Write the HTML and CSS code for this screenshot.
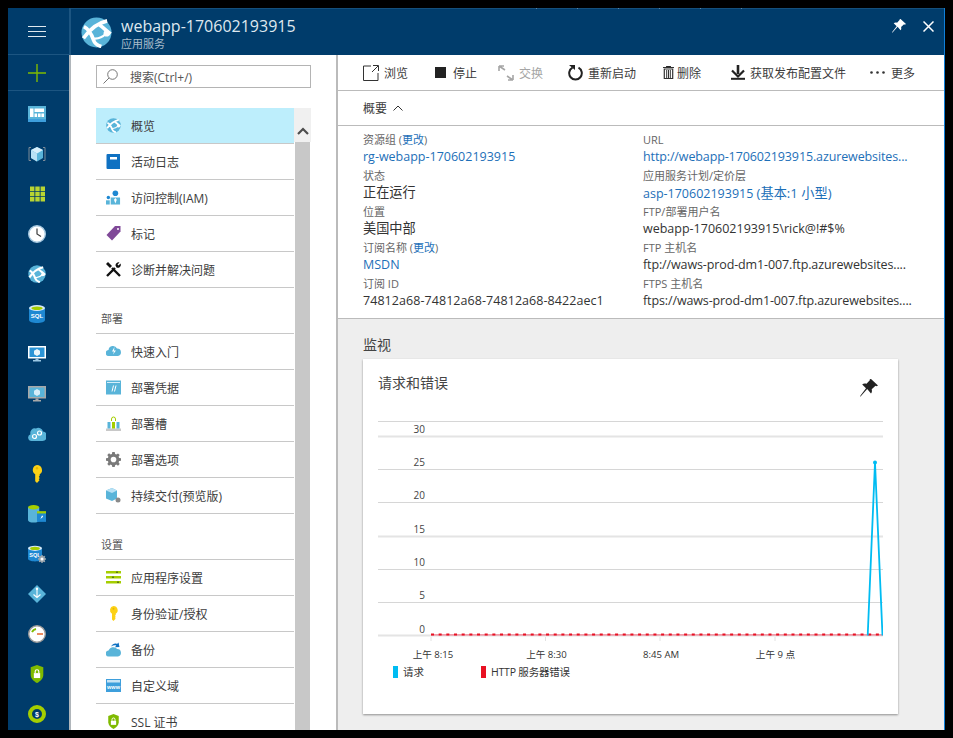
FILE: index.html
```html
<!DOCTYPE html>
<html lang="zh">
<head>
<meta charset="utf-8">
<title>webapp-170602193915</title>
<link rel="stylesheet" href="styles.css">
</head>
<body>
<svg class="defs" width="0" height="0" aria-hidden="true">
  <defs>
    <symbol id="globe" viewBox="0 0 32 32">
      <circle cx="16" cy="16" r="15.500" fill="currentColor"/>
      <path d="M3 10c5 2.500 8 8 10 14 1 3 3 5 8 6.500M27 4C18 6 10 11 2.500 22M19 8c4 3 7 6 11.500 9.500" fill="none" stroke="#fff" stroke-width="3.800"/>
      <path d="M12 22c5 1 10-1 14-5" fill="none" stroke="#fff" stroke-width="2.200"/>
      <circle cx="26.500" cy="17" r="3.200" fill="#fff"/>
    </symbol>
    <symbol id="key" viewBox="0 0 14 20">
      <path d="M7 0a5.600 5.600 0 0 1 3 10.300V12L9 13l1 1.500-1 1.200.8 1.300L7 20l-2-2V10.300A5.600 5.600 0 0 1 7 0z" fill="#fcd116"/>
      <circle cx="7" cy="3.600" r="1.300" fill="#e8b800"/>
    </symbol>
    <symbol id="shield" viewBox="0 0 16 20">
      <path d="M8 0l7 2.500V11c0 4-3.500 7-7 9-3.500-2-7-5-7-9V2.500z" fill="#7fba00"/>
      <path d="M4.500 9h7v5.500h-7z" fill="#fff"/>
      <path d="M6 9V7.300a2 2 0 0 1 4 0V9" fill="none" stroke="#fff" stroke-width="1.300"/>
    </symbol>
    <symbol id="pin" viewBox="0 0 18 18">
      <path d="M11 0l7 6.500-1.500.8-1-.6-3.800 3.500c.5 1.800.2 3.300-.7 4.300L7.200 10 1 17l-1 1 .5-1.500L6 9.300 2.200 5.500c1.100-1 2.600-1.200 4.300-.7l3.500-3.700-.4-.8z" fill="currentColor"/>
    </symbol>
    <symbol id="db" viewBox="0 0 16 18">
      <path d="M0 3v12c0 1.700 3.600 3 8 3s8-1.300 8-3V3z" fill="#1e88d2"/>
      <ellipse cx="8" cy="3" rx="8" ry="3" fill="#d6e9f7"/>
      <ellipse cx="8" cy="3.200" rx="5.600" ry="1.800" fill="#a5ce00"/>
    </symbol>
    <symbol id="monitor" viewBox="0 0 18 16">
      <path d="M0 0h18v12.500H0z" fill="currentColor"/>
      <path d="M1.500 1.500h15v9.500h-15z" fill="var(--screen)"/>
      <path d="M7.500 12.500h3v1.500h-3zM5 14h8v1.500H5z" fill="var(--stand)"/>
      <path d="M9 3l3 1.700v3.500L9 10 6 8.200V4.700z" fill="var(--cube)"/>
    </symbol>
    <symbol id="gear" viewBox="0 0 16 16">
      <path d="M6.700 0h2.600l.4 2.100 1.300.6L12.800 1.500l1.800 1.800-1.200 1.800.6 1.300 2 .3v2.600l-2 .4-.6 1.300 1.200 1.800-1.800 1.800-1.800-1.200-1.300.6-.4 2H6.700l-.4-2-1.300-.6-1.800 1.200-1.800-1.800 1.200-1.800-.6-1.300-2-.4V6.700l2-.4.600-1.300-1.200-1.800 1.800-1.800 1.800 1.200 1.300-.6z" fill="currentColor"/>
      <circle cx="8" cy="8" r="3" fill="#fff"/>
    </symbol>
  </defs>
</svg>

<div class="frame">
  <nav class="rail">
    <div class="rail-top">
      <svg class="ic-menu" width="18" height="11" viewBox="0 0 18 11"><path d="M0 .5h18M0 5.500h18M0 10.500h18" stroke="#dfe8ef" stroke-width="1"/></svg>
    </div>
    <div class="rail-add">
      <svg width="18" height="18" viewBox="0 0 18 18"><path d="M9 0v18M0 9h18" stroke="#7fba00" stroke-width="1.400"/></svg>
    </div>
    <div class="rail-list">
      <svg class="ri" viewBox="0 0 18 16"><path d="M0 0h18v16H0z" fill="#59b4d9"/><path d="M0 13h18v3H0z" fill="#3e9fdc"/><path d="M2 2.500h3.500v8.500H2zM6.500 2.500H16V6H6.500zM6.500 7.500h2.600V11H6.500zM10 7.500h2.600V11H10zM13.400 7.500H16V11h-2.600z" fill="#fff"/></svg>
      <svg class="ri" viewBox="0 0 18 16"><path d="M3 1.500H1v13h2M15 1.500h2v13h-2" fill="none" stroke="#7c8b98" stroke-width="1"/><path d="M9 1l6 3v8l-6 3.500L3 12V4z" fill="#59b4d9"/><path d="M9 1l6 3-6 3.500L3 4z" fill="#d6eefa"/><path d="M9 7.500v8L3 12V4z" fill="#b8e1f5"/></svg>
      <svg class="ri ri-grid" viewBox="0 0 15 15"><path d="M0 0h4.400v4.400H0zM5.300 0h4.400v4.400H5.300zM10.600 0H15v4.400h-4.400zM0 5.300h4.400v4.400H0zM5.300 5.300h4.400v4.400H5.300zM10.600 5.300H15v4.400h-4.400zM0 10.600h4.400V15H0zM5.300 10.600h4.400V15H5.300zM10.600 10.600H15V15h-4.400z" fill="#b8d432"/></svg>
      <svg class="ri" viewBox="0 0 18 18"><circle cx="9" cy="9" r="8.300" fill="#fff" stroke="#a7c9e0" stroke-width="1.400"/><path d="M9 3.500V9l4 2.500" fill="none" stroke="#3c3c3c" stroke-width="1.200"/></svg>
      <svg class="ri rc-globe"><use href="#globe"/></svg>
      <svg class="ri" viewBox="0 0 16 18"><use href="#db"/><text x="8" y="13" class="sql-t">SQL</text></svg>
      <svg class="ri rc-mon1"><use href="#monitor"/></svg>
      <svg class="ri rc-mon2"><use href="#monitor"/></svg>
      <svg class="ri" viewBox="0 0 18 15"><path d="M3.500 14.500a3.500 3.500 0 0 1-1-6.800A4.500 4.500 0 0 1 8 2 4.800 4.800 0 0 1 15 5a4.800 4.800 0 0 1-.5 9.500z" fill="#59b4d9"/><circle cx="6.500" cy="10" r="2" fill="none" stroke="#fff" stroke-width="1.200"/><circle cx="11.500" cy="6.500" r="2" fill="none" stroke="#fff" stroke-width="1.200"/></svg>
      <svg class="ri"><use href="#key"/></svg>
      <svg class="ri" viewBox="0 0 16 16"><path d="M0 2v11c0 1.600 2.300 2.600 5 2.600s5-1 5-2.600V2z" fill="#59b4d9"/><ellipse cx="5" cy="2" rx="5" ry="2" fill="#a5ce00"/><path d="M8 6h8v9H8z" fill="#1e88d2"/><path d="M8 5.500h8v2H8z" fill="#a5ce00"/><path d="M12.500 9L11 12.500l2.500-2z" fill="#fff"/></svg>
      <svg class="ri" viewBox="0 0 18 18"><use href="#db" width="14" height="17"/><text x="7" y="11.500" class="sql-t sql-s">SQL</text><g class="rail-gear"><use href="#gear" x="10" y="10" width="8" height="8"/></g></svg>
      <svg class="ri" viewBox="0 0 18 18"><path d="M9 0l9 9-9 9-9-9z" fill="#59b4d9"/><path d="M9 3.500v8M5.500 9.500L9 12.500l3.500-3" fill="none" stroke="#fff" stroke-width="1.100"/><circle cx="9" cy="3.800" r="1.200" fill="#fff"/></svg>
      <svg class="ri" viewBox="0 0 18 18"><circle cx="9" cy="9" r="8.300" fill="#fff" stroke="#9b9b9b" stroke-width="1.400"/><path d="M4 7a6 6 0 0 1 4-3" fill="none" stroke="#7fba00" stroke-width="2"/><path d="M9 9h6" stroke="#e25a1c" stroke-width="1.400"/></svg>
      <svg class="ri"><use href="#shield"/></svg>
      <svg class="ri" viewBox="0 0 18 18"><circle cx="9" cy="9" r="7" fill="none" stroke="#a5ce00" stroke-width="4"/><text x="9" y="11.500" class="coin-t">$</text></svg>
    </div>
  </nav>

  <div class="main">
    <header class="head">
      <span class="head-ticks"></span>
      <svg class="head-logo"><use href="#globe"/></svg>
      <div class="head-text">
        <div class="head-title">webapp-170602193915</div>
        <div class="head-sub">应用服务</div>
      </div>
      <svg class="head-pin"><use href="#pin"/></svg>
      <svg class="head-close" width="11" height="11" viewBox="0 0 11 11"><path d="M.5.500l10 10M10.500.500l-10 10" stroke="#fff" stroke-width="1.500"/></svg>
    </header>

    <div class="body">
      <aside class="menu">
        <div class="search">
          <svg width="15" height="15" viewBox="0 0 15 15"><circle cx="9.500" cy="5.500" r="4.800" fill="none" stroke="#666" stroke-width=".9"/><path d="M6 9L.5 14.500" stroke="#666" stroke-width=".9"/></svg>
          <span>搜索(Ctrl+/)</span>
        </div>
        <div class="menu-scroll">
          <div class="menu-list">
            <div class="item active"><svg class="mi c-globe"><use href="#globe"/></svg><span>概览</span></div>
            <div class="item"><svg class="mi" viewBox="0 0 14 15"><path d="M0 1a1 1 0 0 1 1-1h12.500v15H1a1 1 0 0 1-1-1z" fill="#0f71c2"/><path d="M3.500 3h7v2.500h-7z" fill="#fff"/></svg><span>活动日志</span></div>
            <div class="item"><svg class="mi" viewBox="0 0 16 15"><circle cx="10" cy="3" r="3" fill="#1e88d2"/><path d="M5 7.500h10V15H5z" fill="#59b4d9"/><path d="M10 8l-1.500 2L10 14l1.500-4z" fill="#fff"/><circle cx="2.500" cy="7.500" r="1.800" fill="#1e88d2"/><path d="M0 10.500h4V15H0z" fill="#59b4d9"/></svg><span>访问控制(IAM)</span></div>
            <div class="item"><svg class="mi" viewBox="0 0 15 15"><path d="M9 0h5.500v5.500L6 14.500.5 9z" fill="#804998"/><circle cx="12" cy="3" r="1" fill="#fff"/></svg><span>标记</span></div>
            <div class="item"><svg class="mi" viewBox="0 0 15 15"><path d="M1 14L9 6M14 14L6 6" stroke="#111" stroke-width="2.400"/><path d="M9.500 3.500A3 3 0 0 1 13.500.500L11.500 2.500l1 1 2-2a3 3 0 0 1-4 4zM0 2l2-2 4 4-2 2z" fill="#111"/></svg><span>诊断并解决问题</span></div>
            <div class="group">部署</div>
            <div class="item"><svg class="mi" viewBox="0 0 15 15"><path d="M3 12a3 3 0 0 1-.5-6A4.500 4.500 0 0 1 11 4.500 3.800 3.800 0 0 1 12 12z" fill="#59b4d9"/><path d="M8.500 3L6 7.500h2L7 10.500 10 6.500H8z" fill="#fff"/></svg><span>快速入门</span></div>
            <div class="item"><svg class="mi" viewBox="0 0 15 14"><path d="M0 0h15v14H0z" fill="#59b4d9"/><path d="M1 2h13" stroke="#d6eefa"/><path d="M6 11l1.500-6M8.500 11L10 5" stroke="#fff" stroke-width="1"/></svg><span>部署凭据</span></div>
            <div class="item"><svg class="mi" viewBox="0 0 15 15"><path d="M0 12.500h15V15H0z" fill="#c8c8c8"/><path d="M1.500 6h3v6.500h-3z" fill="#59b4d9"/><path d="M6 6h3v6.500H6z" fill="#a5ce00"/><path d="M10.500 6h3v6.500h-3z" fill="#59b4d9"/><path d="M5.500 5V3a2 2 0 0 1 4 0v2" fill="none" stroke="#a5ce00"/></svg><span>部署槽</span></div>
            <div class="item"><svg class="mi c-gear"><use href="#gear"/></svg><span>部署选项</span></div>
            <div class="item"><svg class="mi" viewBox="0 0 15 15"><path d="M6 0l5 2.500v8L6 13l-6-2.500v-8z" fill="#59b4d9"/><path d="M6 0l5 2.500L6 5 0 2.500z" fill="#b8e1f5"/><circle cx="12" cy="12" r="2.500" fill="#8a8a8a"/></svg><span>持续交付(预览版)</span></div>
            <div class="group">设置</div>
            <div class="item"><svg class="mi" viewBox="0 0 15 13"><path d="M0 0h15v2.500H0zM0 5h15v2.500H0zM0 10h15v2.500H0z" fill="#a5ce00"/><path d="M10 .5h2v1.500h-2zM6 5.500h2V7H6zM11 10.500h2V12h-2z" fill="#5c7a10"/></svg><span>应用程序设置</span></div>
            <div class="item"><svg class="mi"><use href="#key"/></svg><span>身份验证/授权</span></div>
            <div class="item"><svg class="mi" viewBox="0 0 15 14"><path d="M3 14a3 3 0 0 1-.5-6A5 5 0 0 1 11 6.500 3.800 3.800 0 0 1 12 14z" fill="#59b4d9"/><path d="M5 4c1.500-2.500 4-3.500 6-2.500L12.500 0l1 4.500-4.500.2 1.300-1.600C8.500 2.500 7 3 5 4z" fill="#0f71c2"/></svg><span>备份</span></div>
            <div class="item"><svg class="mi" viewBox="0 0 15 13"><path d="M0 0h15v13H0z" fill="#3e9fdc"/><path d="M1 1h13v2.500H1z" fill="#c9e4f5"/><text x="7.500" y="9.500" class="www-t">www</text></svg><span>自定义域</span></div>
            <div class="item"><svg class="mi"><use href="#shield"/></svg><span>SSL 证书</span></div>
          </div>
          <div class="scrollbar">
            <div class="scroll-up"><svg width="12" height="8" viewBox="0 0 12 8"><path d="M1 7l5-5 5 5" fill="none" stroke="#4d4d4d" stroke-width="2.200"/></svg></div>
            <div class="scroll-thumb"></div>
          </div>
        </div>
      </aside>

      <section class="pane">
        <div class="toolbar">
          <div class="tool t-browse"><svg width="16" height="16" viewBox="0 0 16 16"><path d="M8 1H.5v14.500H15V8M9 7l6-6M10 .5h5.500V6" fill="none" stroke="#333" stroke-width="1"/></svg><span>浏览</span></div>
          <div class="tool t-stop"><svg width="11" height="11" viewBox="0 0 11 11"><path d="M0 0h11v11H0z" fill="#222"/></svg><span>停止</span></div>
          <div class="tool t-swap off"><svg width="16" height="16" viewBox="0 0 16 16"><path d="M1 1l6 4M1 1v5M1 1h5M15 15L9 11M15 15v-5M15 15h-5" fill="none" stroke="#a5a5a5" stroke-width="1.600"/></svg><span>交换</span></div>
          <div class="tool t-restart"><svg width="15" height="17" viewBox="0 0 15 17"><path d="M4.500 3.700a6.300 6.300 0 1 0 6 0" fill="none" stroke="#222" stroke-width="2"/><path d="M1 1h6v5z" fill="#222"/></svg><span>重新启动</span></div>
          <div class="tool t-del"><svg width="11" height="13" viewBox="0 0 11 13"><path d="M0 1.500h11M1.300 3h8.400v9.500H1.300z" fill="none" stroke="#333" stroke-width="1.200"/><path d="M3.700 4v8M5.500 4v8M7.300 4v8M3.500 0h4v1h-4z" stroke="#333" stroke-width="1"/></svg><span>删除</span></div>
          <div class="tool t-dl"><svg width="14" height="15" viewBox="0 0 14 15"><path d="M7 0v9" stroke="#222" stroke-width="2.600"/><path d="M1 5.500l6 6 6-6" fill="none" stroke="#222" stroke-width="2.200"/><path d="M0 13.800h14" stroke="#222" stroke-width="2"/></svg><span>获取发布配置文件</span></div>
          <div class="tool t-more"><svg width="15" height="3" viewBox="0 0 15 3"><circle cx="1.500" cy="1.500" r="1.300" fill="#333"/><circle cx="7.500" cy="1.500" r="1.300" fill="#333"/><circle cx="13.500" cy="1.500" r="1.300" fill="#333"/></svg><span>更多</span></div>
        </div>

        <div class="summary-head"><span>概要</span><svg width="10" height="6" viewBox="0 0 10 6"><path d="M.5 5.500L5 1l4.500 4.500" fill="none" stroke="#333" stroke-width="1"/></svg></div>

        <div class="info">
          <div class="f"><div class="k">资源组 (<a class="lnk">更改</a>)</div><div class="v lnk">rg-webapp-170602193915</div></div>
          <div class="f"><div class="k">URL</div><div class="v lnk tight">http://webapp-170602193915.azurewebsites...</div></div>
          <div class="f"><div class="k">状态</div><div class="v cjk">正在运行</div></div>
          <div class="f"><div class="k">应用服务计划/定价层</div><div class="v lnk">asp-170602193915 <span class="cjk">(基本:1 小型)</span></div></div>
          <div class="f"><div class="k">位置</div><div class="v cjk">美国中部</div></div>
          <div class="f"><div class="k">FTP/部署用户名</div><div class="v">webapp-170602193915\rick@!#$%</div></div>
          <div class="f"><div class="k">订阅名称 (<a class="lnk">更改</a>)</div><div class="v lnk">MSDN</div></div>
          <div class="f"><div class="k">FTP 主机名</div><div class="v tight">ftp://waws-prod-dm1-007.ftp.azurewebsites....</div></div>
          <div class="f"><div class="k">订阅 ID</div><div class="v wide">74812a68-74812a68-74812a68-8422aec1</div></div>
          <div class="f"><div class="k">FTPS 主机名</div><div class="v tight">ftps://waws-prod-dm1-007.ftp.azurewebsites....</div></div>
        </div>

        <div class="monitor">
          <h2 class="mon-title">监视</h2>
          <div class="card">
            <div class="card-head">
              <div class="card-title">请求和错误</div>
              <svg class="card-pin"><use href="#pin"/></svg>
            </div>
            <svg class="chart" width="505" height="240" viewBox="0 0 505 240">
              <g class="grid">
                <path d="M0 .5h505"/><path class="thick" d="M0 15.500h505"/><path d="M0 48.500h505"/><path d="M0 81.500h505"/><path class="thick" d="M0 115.500h505"/><path d="M0 148.500h505"/><path d="M0 181.500h505"/><path class="thick" d="M0 214.500h505"/>
              </g>
              <g class="ylab">
                <text x="47" y="12">30</text><text x="47" y="45">25</text><text x="47" y="78">20</text><text x="47" y="112">15</text><text x="47" y="145">10</text><text x="47" y="178">5</text><text x="47" y="212">0</text>
              </g>
              <path class="ticks" d="M53 216v4M167.500 216v4M282 216v4M397 216v4"/>
              <path class="err-line" d="M53 213.900h452"/>
              <path class="err-dots" d="M53 213.500h452"/>
              <path class="spike" d="M489.700 214.500L497 41.500 504.500 214.500"/>
              <circle class="spike-dot" cx="497" cy="41.500" r="2"/>
              <g class="xlab">
                <text x="55" y="237">上午 8:15</text><text x="168.500" y="237">上午 8:30</text><text x="283" y="237">8:45 AM</text><text x="397.500" y="237">上午 9 点</text>
              </g>
            </svg>
            <div class="legend">
              <div class="lg lg-req"><i></i><span>请求</span></div>
              <div class="lg lg-err"><i></i><span>HTTP 服务器错误</span></div>
            </div>
          </div>
        </div>
      </section>
    </div>
  </div>
</div>
</body>
</html>
```
FILE: styles.css
```css
* { box-sizing: border-box; }
html, body { margin: 0; height: 100%; background: #000; }
body {
  padding: 8px;
  overflow: hidden;
  font-family: "Open Sans", "Noto Sans CJK SC", sans-serif;
  color: #333;
}
.defs { position: absolute; }
.frame { display: flex; width: 937px; height: 722px; overflow: hidden; background: #fff; }

/* left rail */
.rail { width: 63px; flex: none; background: #003c6b; border-right: 2px solid #b0b6bb; display: flex; flex-direction: column; }
.rail-top { height: 47px; flex: none; margin-right: -2px; display: flex; align-items: center; justify-content: center; border-bottom: 1px solid #1c5581; border-right: 2px solid #1c5581; padding: 1px 3px 0 0; }
.rail-add { height: 36px; flex: none; display: flex; align-items: center; justify-content: center; border-bottom: 1px solid #1c5581; padding-right: 3px; }
.rail-list { display: flex; flex-direction: column; align-items: center; gap: 22px; padding: 14px 3px 0 0; }
.ri { width: 18px; height: 18px; flex: none; }
.ri-grid { width: 15px; }
.rc-globe { color: #59b4d9; }
.rc-mon1 { color: #fff; --screen: #2b94d6; --stand: #9bc7e3; --cube: #e8f5fc; }
.rc-mon2 { color: #a8a8a8; --screen: #59b4d9; --stand: #a8a8a8; --cube: #d6eefa; }
.rail-gear { color: #9aa5ad; }
.sql-t { font: 700 6px "Liberation Sans", sans-serif; fill: #fff; text-anchor: middle; }
.sql-s { font-size: 5.500px; }
.coin-t { font: 700 7px "Liberation Sans", sans-serif; fill: #fff; text-anchor: middle; }
.www-t { font: 700 5.500px "Liberation Sans", sans-serif; fill: #fff; text-anchor: middle; }

/* main */
.main { flex: 1; min-width: 0; display: flex; flex-direction: column; border-right: 1px solid #0f7fd8; }
.head { position: relative; height: 47px; flex: none; background: #003c6b; border-top: 1px solid #15507d; display: flex; align-items: center; padding: 0 10px 0 10px; color: #fff; }
.head-ticks { position: absolute; left: 465px; top: -1px; width: 206px; height: 1px; background-image: linear-gradient(90deg, #5d86a5 1px, transparent 1px); background-size: 41px 1px; }
.head-logo { width: 31px; height: 31px; color: #59b4d9; flex: none; }
.head-text { flex: 1; margin-left: 9px; padding-top: 5px; }
.head-title { font-size: 16px; line-height: 20px; color: #dfe8ef; margin-top: -3px; }
.head-sub { font-size: 11px; line-height: 15px; color: #a9bccb; }
.head-pin { width: 14px; height: 14px; color: #fff; margin: 0 17px 13px 0; }
.head-close { margin-bottom: 12px; }

.body { flex: 1; min-height: 0; display: flex; }

/* menu */
.menu { width: 267px; flex: none; padding: 10px 0 0 25px; border-right: 2px solid #bbb; overflow: hidden; }
.search { width: 215px; height: 23px; border: 1px solid #b4b4b4; display: flex; align-items: center; gap: 12px; padding-left: 6px; font-size: 12px; color: #555; }
.menu-scroll { display: flex; width: 215px; margin-top: 20px; }
.menu-list { width: 198px; flex: none; }
.item { height: 36px; display: flex; align-items: center; border-bottom: 1px solid #c8c8c8; padding-left: 10px; font-size: 12px; color: #3c3c3c; }
.item.active { background: #bdeefc; }
.mi { width: 15px; height: 15px; flex: none; margin-right: 10px; }
.c-globe { color: #59b4d9; }
.c-gear { color: #7a7a7a; }
.group { height: 46px; display: flex; align-items: flex-end; padding: 0 0 7px 5px; border-bottom: 1px solid #c8c8c8; font-size: 11px; color: #555; }
.scrollbar { width: 15px; margin-left: 1px; flex: none; background: #c8c8c8; display: flex; flex-direction: column; }
.scroll-up { height: 34px; margin: 0 -1px; background: #f0f0f0; display: flex; align-items: center; justify-content: center; padding-top: 11px; }
.scroll-thumb { flex: 1; }

/* right pane */
.pane { flex: 1; min-width: 0; display: flex; flex-direction: column; background: #eee; overflow: hidden; }
.toolbar { height: 36px; flex: none; background: #fff; border-bottom: 1px solid #bbb; display: flex; align-items: center; padding-left: 25px; font-size: 12px; color: #3c3c3c; }
.tool { display: flex; align-items: center; flex: none; }
.tool span { margin-left: 5px; }
.t-browse { width: 72px; }
.t-stop { width: 63px; }
.t-stop span { margin-left: 7px; }
.t-swap { width: 70px; }
.t-restart { width: 95px; }
.t-del { width: 68px; }
.t-del span { margin-left: 3px; }
.t-dl { width: 139px; }
.t-more span { margin-left: 6px; }
.off { color: #a5a5a5; }
.summary-head { height: 35px; flex: none; background: #fff; border-bottom: 1px solid #bbb; display: flex; align-items: center; gap: 6px; padding-left: 25px; font-size: 12px; color: #3c3c3c; }
.info { height: 193px; flex: none; background: #fff; border-bottom: 1px solid #bbb; padding: 6px 0 0 25px; display: grid; grid-template-columns: 280px 1fr; grid-auto-rows: 36px; }
.k { height: 15px; font-size: 11px; line-height: 16px; color: #666; white-space: nowrap; }
.v { font-size: 12.500px; line-height: 20px; color: #333; white-space: nowrap; }
.v.cjk { font-size: 13.200px; margin-top: -1px; }
span.cjk { font-size: 13.200px; }
.tight { letter-spacing: -.12px; }
.wide { letter-spacing: .06px; }
.lnk { color: #1d6fb8; }
.monitor { padding: 0 0 0 25px; flex: 1; min-height: 0; }
.mon-title { margin: 16px 0 0; height: 24px; font-size: 14px; line-height: 20px; font-weight: 400; color: #444; }
.card { width: 535px; height: 355px; background: #fff; box-shadow: 0 1px 2px rgba(0,0,0,.4); padding: 0 15px; }
.card-head { height: 62px; display: flex; justify-content: space-between; padding-top: 14px; }
.card-title { font-size: 14px; line-height: 20px; color: #444; }
.card-pin { width: 18px; height: 18px; color: #222; margin: 6px 5px 0 0; }
.chart { display: block; }
.grid path { stroke: #d6d6d6; stroke-width: 1; fill: none; }
.grid path.thick { stroke: #e4e4e4; stroke-width: 2; }
.ylab text { font: 10px "Open Sans", sans-serif; fill: #444; text-anchor: end; }
.xlab text { font: 9.600px "Open Sans", "Noto Sans CJK SC", sans-serif; fill: #333; text-anchor: middle; }
.ticks { stroke: #e2e2e2; stroke-width: 1; }
.err-line { stroke: #f0637a; stroke-width: 1; }
.err-dots { stroke: #e81123; stroke-width: 2; stroke-dasharray: 3 4.670; fill: none; }
.spike { stroke: #00bcf2; stroke-width: 1.800; fill: none; stroke-linejoin: bevel; }
.spike-dot { fill: #00bcf2; }
.legend { display: flex; padding: 3px 0 0 15px; font-size: 10.500px; color: #333; }
.lg { display: flex; align-items: center; gap: 5px; }
.lg i { width: 5px; height: 12px; display: block; }
.lg-req { width: 88px; }
.lg-req i { background: #00bcf2; }
.lg-err i { background: #e81123; }
.lg-err span { letter-spacing: -.2px; }
```
